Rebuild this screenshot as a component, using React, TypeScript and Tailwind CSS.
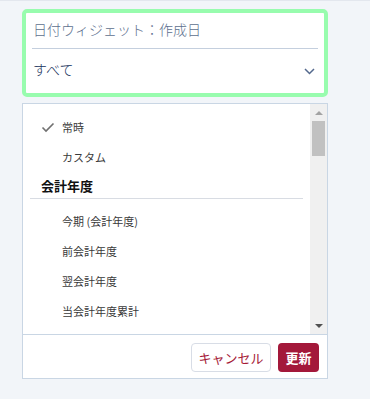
import React from "react";

const font = { fontFamily: '"Noto Sans CJK JP", "Noto Sans", sans-serif' };

function Check() {
  return (
    <svg width="14" height="11" viewBox="0 0 14 11" className="shrink-0">
      <path d="M1.5 5.5 L5 9 L12.5 1.5" fill="none" stroke="#707070" strokeWidth="1.6" />
    </svg>
  );
}

function Item({ label, checked }: { label: string; checked?: boolean }) {
  return (
    <div className="h-[30px] flex items-center pl-[18px]">
      <div className="w-[21px] flex items-center">{checked ? <Check /> : null}</div>
      <span className="text-[11px] text-[#3a3a3a] leading-none">{label}</span>
    </div>
  );
}

export default function App() {
  return (
    <div className="w-[370px] h-[399px] bg-[#f2f5f9] border-t border-[#e3e7ee] pl-[22px] pt-[8px]" style={font}>
      <div className="w-[306px] h-[88px] border-[4px] border-[#98fcae] rounded-[5px] bg-white px-[6px] flex flex-col">
        <div className="pt-[6px] pb-[9px] pl-[1px] border-b border-[#c4cfde]">
          <div className="text-[14px] leading-[20px] text-[#5d6f8e] font-light">日付ウィジェット：作成日</div>
        </div>
        <div className="flex-1 flex items-center justify-between pl-[1px] pr-[3px]">
          <span className="text-[14px] leading-[20px] text-[#16325c] pb-[4px] font-light">すべて</span>
          <svg width="11" height="7" viewBox="0 0 11 7">
            <path d="M1 1 L5.5 5.5 L10 1" fill="none" stroke="#54698d" strokeWidth="1.5" />
          </svg>
        </div>
      </div>
      <div className="mt-[6px] w-[306px] h-[276px] border border-[#c9d6e4] bg-white flex flex-col">
        <div className="h-[230px] flex">
          <div className="flex-1 overflow-hidden pt-[8px]">
            <Item label="常時" checked />
            <Item label="カスタム" />
            <div className="h-[26px] flex items-center pl-[18px] text-[13px] font-bold text-[#111] leading-none">会計年度</div>
            <div className="mx-[7px] border-t border-[#d8dce3]" />
            <div className="h-[7px]" />
            <Item label="今期 (会計年度)" />
            <Item label="前会計年度" />
            <Item label="翌会計年度" />
            <Item label="当会計年度累計" />
          </div>
          <div className="w-[17px] bg-[#f0f0f0] flex flex-col items-center">
            <div className="h-[17px] flex items-center justify-center">
              <div className="w-0 h-0 border-l-[4px] border-r-[4px] border-b-[4px] border-l-transparent border-r-transparent border-b-[#a3a3a3]" />
            </div>
            <div className="w-[13px] h-[35px] bg-[#c1c1c1]" />
            <div className="flex-1" />
            <div className="h-[17px] flex items-center justify-center">
              <div className="w-0 h-0 border-l-[4px] border-r-[4px] border-t-[4px] border-l-transparent border-r-transparent border-t-[#505050]" />
            </div>
          </div>
        </div>
        <div className="flex-1 border-t border-[#c9d6e4] flex justify-end items-start pt-[8px] pr-[8px] gap-[7px]">
          <button className="w-[80px] h-[29px] rounded-[4px] border border-[#d8dde6] bg-white text-[13px] text-[#a61a38] flex items-center justify-center leading-none">キャンセル</button>
          <button className="w-[41px] h-[29px] rounded-[4px] bg-[#a3183a] text-[13px] font-bold text-white flex items-center justify-center leading-none">更新</button>
        </div>
      </div>
    </div>
  );
}
